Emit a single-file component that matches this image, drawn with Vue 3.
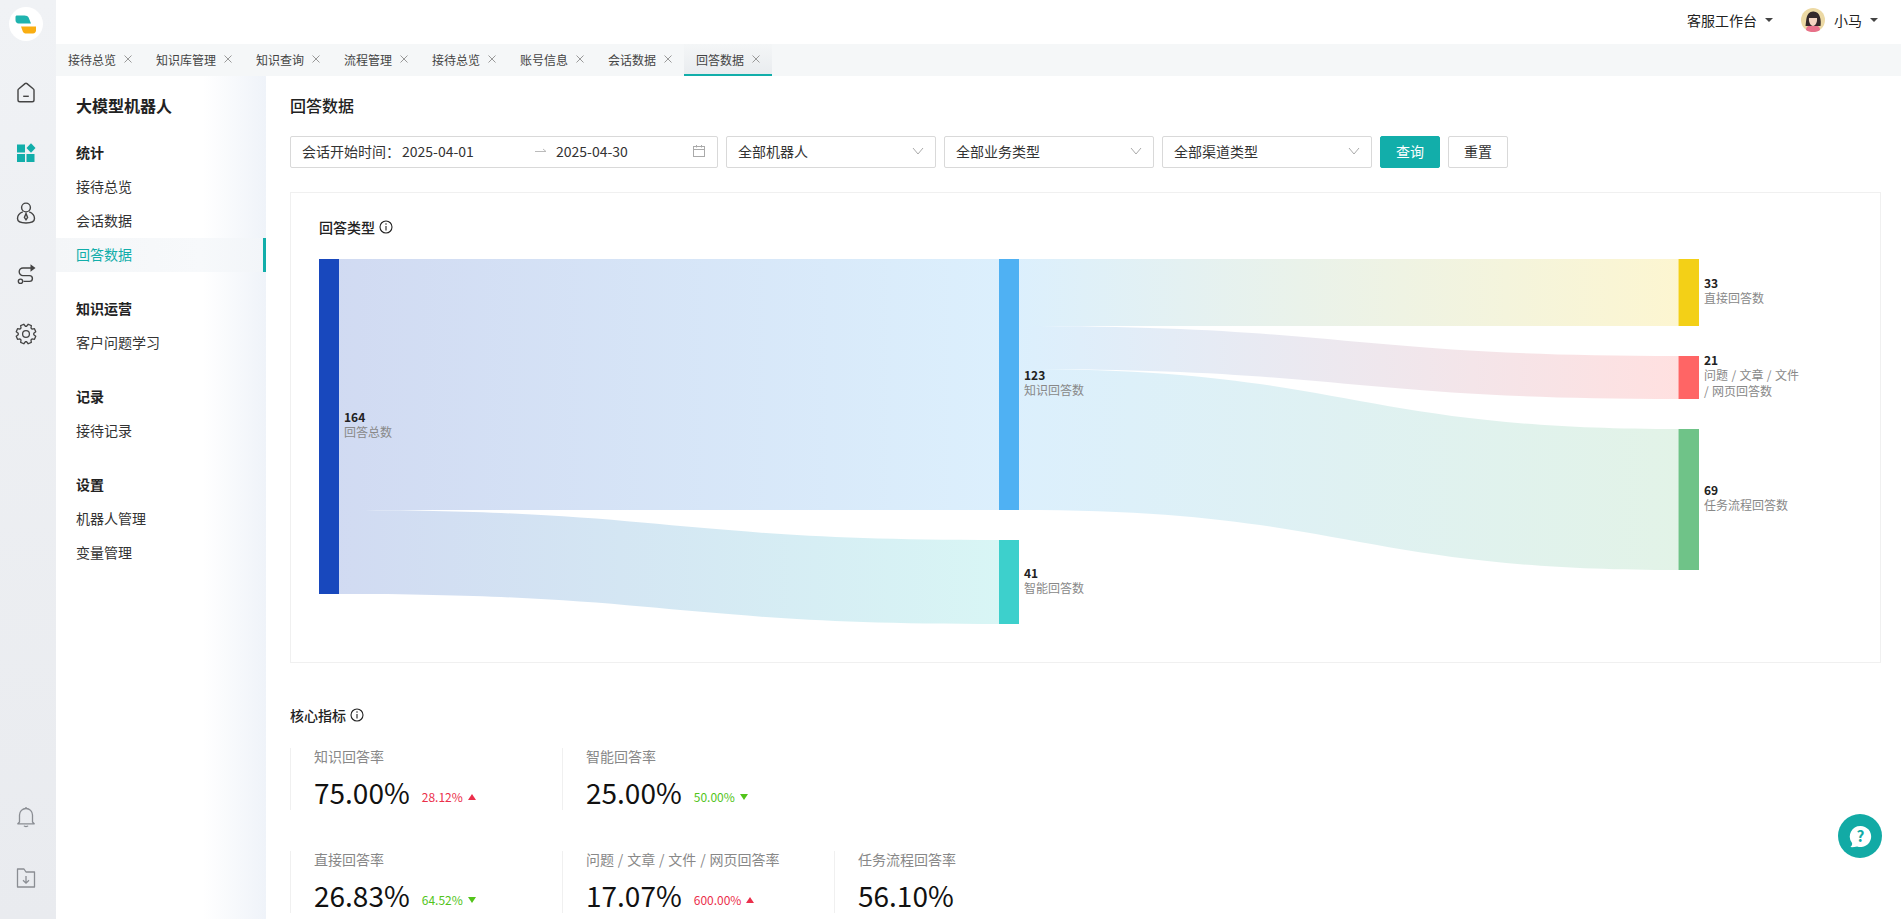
<script setup>
const tabs = ['接待总览', '知识库管理', '知识查询', '流程管理', '接待总览', '账号信息', '会话数据', '回答数据']

const menu = [
  { title: '统计', items: ['接待总览', '会话数据', '回答数据'] },
  { title: '知识运营', items: ['客户问题学习'] },
  { title: '记录', items: ['接待记录'] },
  { title: '设置', items: ['机器人管理', '变量管理'] },
]

const selects = ['全部机器人', '全部业务类型', '全部渠道类型']

// outline of the settings icon: 8 teeth round a 22px box
const gearPath = (() => {
  const pts = []
  for (let i = 0; i < 8; i++) {
    const a = (i * Math.PI) / 4 + Math.PI / 8
    for (const [r, off] of [[7.8, -0.3], [10, -0.17], [10, 0.17], [7.8, 0.3]]) {
      pts.push(`${(11 + r * Math.cos(a + off)).toFixed(2)},${(11 + r * Math.sin(a + off)).toFixed(2)}`)
    }
  }
  return `M${pts.join(' L')} Z`
})()

const nodes = {
  total: { x: 0, w: 20, y0: 0, y1: 335, color: '#1848bd', lines: ['回答总数'], value: 164, cy: 158 },
  know: { x: 680, w: 20, y0: 0, y1: 251, color: '#4fb1f3', lines: ['知识回答数'], value: 123, cy: 116 },
  smart: { x: 680, w: 20, y0: 281, y1: 365, color: '#3dd0cc', lines: ['智能回答数'], value: 41, cy: 314 },
  direct: { x: 1359.5, w: 20.5, y0: 0, y1: 67, color: '#f3d017', lines: ['直接回答数'], value: 33, cy: 24 },
  doc: { x: 1359.5, w: 20.5, y0: 97, y1: 140, color: '#ff6565', lines: ['问题 / 文章 / 文件', '/ 网页回答数'], value: 21, cy: 101 },
  task: { x: 1359.5, w: 20.5, y0: 170, y1: 311, color: '#6fc388', lines: ['任务流程回答数'], value: 69, cy: 231 },
}
const nodeList = Object.values(nodes)

// sy/ty: top of the band at each end, h: band height
const links = [
  { id: 'l1', from: 'total', to: 'know', sy: 0, ty: 0, h: 251 },
  { id: 'l2', from: 'total', to: 'smart', sy: 251, ty: 281, h: 84 },
  { id: 'l3', from: 'know', to: 'direct', sy: 0, ty: 0, h: 67 },
  { id: 'l4', from: 'know', to: 'doc', sy: 67, ty: 97, h: 43 },
  { id: 'l5', from: 'know', to: 'task', sy: 110, ty: 170, h: 141 },
].map((l) => {
  const a = nodes[l.from]
  const b = nodes[l.to]
  const x0 = a.x + a.w
  const x1 = b.x
  const mid = (x0 + x1) / 2
  const d = `M${x0},${l.sy} C${mid},${l.sy} ${mid},${l.ty} ${x1},${l.ty} L${x1},${l.ty + l.h} C${mid},${l.ty + l.h} ${mid},${l.sy + l.h} ${x0},${l.sy + l.h} Z`
  return { ...l, d, x0, x1, c0: a.color, c1: b.color }
})

const metricRows = [
  [
    { label: '知识回答率', value: '75.00%', delta: '28.12%', up: true },
    { label: '智能回答率', value: '25.00%', delta: '50.00%', up: false },
  ],
  [
    { label: '直接回答率', value: '26.83%', delta: '64.52%', up: false },
    { label: '问题 / 文章 / 文件 / 网页回答率', value: '17.07%', delta: '600.00%', up: true },
    { label: '任务流程回答率', value: '56.10%' },
  ],
]
</script>

<template>
  <div class="app">
    <aside class="rail">
      <div class="logo">
        <svg width="22" height="19" viewBox="0 0 22 19">
          <path d="M2 .5h7.500c2 0 3.500.8 4.200 2.200L16 8.500H3.500C1.800 8.500.5 7 .5 5V2C.5 1 1 .5 2 .5z" fill="#1fb3ae" />
          <path d="M6 11.500h15v3.800c0 1.800-1.200 3.200-3 3.200h-6.500c-2 0-3.200-.8-3.800-2.300z" fill="#f9ae12" />
        </svg>
      </div>
      <div class="rail-item">
        <svg width="20" height="21" viewBox="0 0 20 21" fill="none" stroke="#444" stroke-width="1.400">
          <path d="M2 8.200a1.500 1.500 0 0 1 .6-1.200L9 1.600a1.600 1.600 0 0 1 2 0l6.400 5.400a1.500 1.500 0 0 1 .6 1.200V18a1.800 1.800 0 0 1-1.800 1.800H3.800A1.800 1.800 0 0 1 2 18z" />
          <path d="M7.200 14.300h5.600" />
        </svg>
      </div>
      <div class="rail-item">
        <svg width="20" height="20" viewBox="0 0 20 20" fill="#12aeaa">
          <rect x="1" y="1.500" width="8" height="8" />
          <rect x="1" y="11" width="8" height="8" />
          <rect x="10.500" y="11" width="8" height="8" />
          <path d="M15 .3 19.500 5 15 9.700 10.500 5z" />
        </svg>
      </div>
      <div class="rail-item">
        <svg width="20" height="22" viewBox="0 0 20 22" fill="none" stroke="#444" stroke-width="1.400">
          <circle cx="10" cy="5.500" r="4.400" />
          <path d="M6.800 9.800C3.500 11 1.500 13.500 1.500 16.500c0 3 3.500 4.500 8.500 4.500s8.500-1.500 8.500-4.500c0-3-2-5.500-5.300-6.700" />
          <path d="M10 11.500l-1.600 4 1.600 2.300 1.600-2.300z" />
        </svg>
      </div>
      <div class="rail-item">
        <svg width="20" height="20" viewBox="0 0 20 20" fill="none" stroke="#444" stroke-width="1.400">
          <path d="M15 4H7a3.800 3.800 0 0 0 0 7.600h6.500a2.900 2.900 0 0 1 0 5.800H7.500" />
          <circle cx="4.500" cy="17.300" r="2.200" />
          <path d="M14.500.3l5 3.700-5 3.700z" fill="#444" stroke="none" />
        </svg>
      </div>
      <div class="rail-item">
        <svg width="22" height="22" viewBox="0 0 22 22" fill="none" stroke="#444" stroke-width="1.300" stroke-linejoin="round">
          <circle cx="11" cy="11" r="3.400" />
          <path :d="gearPath" />
        </svg>
      </div>
      <div class="rail-spacer" />
      <div class="rail-item">
        <svg width="20" height="22" viewBox="0 0 20 22" fill="none" stroke="#8a8d93" stroke-width="1.300">
          <path d="M3.500 16V9a6.500 6.500 0 0 1 13 0v7l1.700 1.800H1.800z" stroke-linejoin="round" />
          <path d="M8 19.800c.5 1 3.500 1 4 0M10 1v1.500" />
        </svg>
      </div>
      <div class="rail-item">
        <svg width="20" height="20" viewBox="0 0 20 20" fill="none" stroke="#8a8d93" stroke-width="1.300">
          <path d="M1.500 1h6.500l2 3h8.500v15h-17z" stroke-linejoin="round" />
          <path d="M10 8v7M7 12.300l3 2.900 3-2.900" />
        </svg>
      </div>
    </aside>

    <div class="main">
      <header class="topbar">
        <div class="drop">客服工作台<i class="caret" /></div>
        <div class="user">
          <svg class="avatar" width="24" height="24" viewBox="0 0 24 24">
            <circle cx="12" cy="12" r="12" fill="#ecd9a4" />
            <path d="M5 22c0-3 2-5 7-5s7 2 7 5c-2 1.500-4.500 2-7 2s-5-.5-7-2z" fill="#e8708a" />
            <path d="M4.500 18c1-5 0-14 7.500-14.500S20.500 13 19.500 18l-3 0H7.500z" fill="#33282a" />
            <path d="M8 10h8c.5 4-1.500 8-4 8s-4.500-4-4-8z" fill="#f3d3c0" />
          </svg>
          小马<i class="caret" />
        </div>
      </header>

      <nav class="tabs">
        <div
          v-for="(tab, i) in tabs"
          :key="i"
          :class="['tab', { active: i === tabs.length - 1 }]"
        >
          {{ tab }}
          <svg width="8" height="8" viewBox="0 0 8 8" stroke="#999" stroke-width="1">
            <path d="M.5.5l7 7M7.500.5l-7 7" />
          </svg>
        </div>
      </nav>

      <div class="body">
        <aside class="sidebar">
          <h2 class="side-title">大模型机器人</h2>
          <section v-for="group in menu" :key="group.title" class="side-group">
            <h3>{{ group.title }}</h3>
            <div
              v-for="item in group.items"
              :key="item"
              :class="['side-item', { active: item === '回答数据' }]"
            >
              {{ item }}
            </div>
          </section>
        </aside>

        <main class="content">
          <h1 class="page-title">回答数据</h1>

          <div class="filters">
            <div class="date-box">
              <span class="date-label">会话开始时间：</span>
              <span class="date-from">2025-04-01</span>
              <svg class="date-arrow" width="14" height="8" viewBox="0 0 14 8" fill="none" stroke="#bbb">
                <path d="M1 4.500h11L9 2" />
              </svg>
              <span>2025-04-30</span>
              <svg class="date-cal" width="14" height="14" viewBox="0 0 14 14" fill="none" stroke="#aaa">
                <rect x="1.500" y="2.500" width="11" height="10" />
                <path d="M1.500 5.500h11M4.500 1v2.500M9.500 1v2.500" />
              </svg>
            </div>
            <div v-for="s in selects" :key="s" class="select">
              {{ s }}
              <svg width="12" height="8" viewBox="0 0 12 8" fill="none" stroke="#aaa">
                <path d="M1 1l5 6 5-6" />
              </svg>
            </div>
            <button class="btn primary">查询</button>
            <button class="btn">重置</button>
          </div>

          <section class="card">
            <div class="heading">
              回答类型
              <svg width="14" height="14" viewBox="0 0 14 14" fill="none" stroke="#222" stroke-width="1.100">
                <circle cx="7" cy="7" r="6" />
                <path d="M7 6v4.500M7 3.300v1.400" />
              </svg>
            </div>
            <svg class="sankey" width="1540" height="370" viewBox="0 0 1540 370">
              <defs>
                <linearGradient
                  v-for="l in links"
                  :id="l.id"
                  :key="l.id"
                  gradientUnits="userSpaceOnUse"
                  :x1="l.x0"
                  :x2="l.x1"
                  y1="0"
                  y2="0"
                >
                  <stop offset="0" :stop-color="l.c0" stop-opacity="0.2" />
                  <stop offset="1" :stop-color="l.c1" stop-opacity="0.2" />
                </linearGradient>
              </defs>
              <path v-for="l in links" :key="l.id" :d="l.d" :fill="`url(#${l.id})`" />
              <g v-for="n in nodeList" :key="n.value">
                <rect :x="n.x" :y="n.y0" :width="n.w" :height="n.y1 - n.y0" :fill="n.color" />
                <text class="node-value" :x="n.x + n.w + 5" :y="n.cy + 5">{{ n.value }}</text>
                <text
                  v-for="(line, i) in n.lines"
                  :key="i"
                  class="node-label"
                  :x="n.x + n.w + 5"
                  :y="n.cy + 20 + i * 16"
                >{{ line }}</text>
              </g>
            </svg>
          </section>

          <div class="heading core">
            核心指标
            <svg width="14" height="14" viewBox="0 0 14 14" fill="none" stroke="#222" stroke-width="1.100">
              <circle cx="7" cy="7" r="6" />
              <path d="M7 6v4.500M7 3.300v1.400" />
            </svg>
          </div>

          <div class="metrics">
            <div v-for="(row, r) in metricRows" :key="r" class="metric-row">
              <div v-for="m in row" :key="m.label" class="metric">
                <div class="metric-label">{{ m.label }}</div>
                <div class="metric-line">
                  <span class="metric-value">{{ m.value }}</span>
                  <span v-if="m.delta" :class="['delta', m.up ? 'up' : 'down']">
                    {{ m.delta }}<i class="tri" />
                  </span>
                </div>
              </div>
            </div>
          </div>
        </main>
      </div>
    </div>

    <div class="help">
      <svg width="25" height="25" viewBox="0 0 26 26">
        <path d="M13 2a11 11 0 1 1-3.500 21.400C7 24 4 24.300 2.500 24c1.500-1 2-2.500 1.700-4.300A11 11 0 0 1 13 2z" fill="#fff" />
        <text x="13" y="18.500" text-anchor="middle" class="help-mark">?</text>
      </svg>
    </div>
  </div>
</template>

<style scoped>
.app {
  display: flex;
  height: 100vh;
  overflow: hidden;
  position: relative;
  color: #222;
  font-family: "Noto Sans CJK SC", "Noto Sans", sans-serif;
  font-size: 14px;
}

.rail {
  display: flex;
  flex-direction: column;
  align-items: center;
  flex: none;
  width: 56px;
  padding: 0 4px 11px 0;
  box-sizing: border-box;
  background: linear-gradient(#f0f2f5, #e9ebef);
}

.logo {
  display: flex;
  align-items: center;
  justify-content: center;
  width: 34px;
  height: 34px;
  margin: 7px 0 21px;
  border-radius: 50%;
  background: #fff;
}

.rail-item {
  display: flex;
  align-items: center;
  justify-content: center;
  height: 60.5px;
}

.rail-spacer {
  flex: 1;
}

.main {
  display: flex;
  flex-direction: column;
  flex: 1;
  min-width: 0;
}

.topbar {
  display: flex;
  align-items: center;
  justify-content: flex-end;
  gap: 28px;
  flex: none;
  height: 44px;
  padding: 0 23px 4px 0;
  box-sizing: border-box;
  background: #fff;
}

.drop,
.user {
  display: flex;
  align-items: center;
}

.avatar {
  margin-right: 9px;
}

.caret {
  width: 0;
  height: 0;
  margin-left: 8px;
  border-left: 4px solid transparent;
  border-right: 4px solid transparent;
  border-top: 4px solid #444;
}

.tabs {
  display: flex;
  flex: none;
  height: 32px;
  background: #f5f7f8;
}

.tab {
  display: flex;
  align-items: center;
  gap: 8px;
  padding: 0 12px 2px;
  box-sizing: border-box;
  font-size: 12px;
  color: #444;
}

.tab.active {
  padding-bottom: 0;
  background: linear-gradient(#f4f6f7, #e9ecef);
  border-bottom: 2px solid #12aeaa;
}

.body {
  display: flex;
  flex: 1;
  min-height: 0;
}

.sidebar {
  flex: none;
  width: 210px;
  background: linear-gradient(90deg, #fff 70%, #eff3f9);
}

.side-title {
  margin: 0;
  padding: 17px 20px 0;
  font-size: 16px;
  line-height: 24px;
  font-weight: 600;
}

.side-group {
  margin-bottom: 20px;
}

.side-group h3 {
  margin: 0;
  padding: 0 20px;
  height: 34px;
  line-height: 32px;
  font-size: 14px;
  font-weight: 600;
}

.side-title + .side-group {
  margin-top: 19px;
}

.side-item {
  height: 34px;
  padding: 0 20px;
  line-height: 32px;
  color: #333;
}

.side-item.active {
  color: #12aeaa;
  background: linear-gradient(90deg, #f4f6f8, #f7f9fb 70%, #f2f5f9);
  border-right: 3px solid #12aeaa;
}

.content {
  flex: 1;
  min-width: 0;
  padding: 17px 20px 0 24px;
  background: #fff;
}

.page-title {
  margin: 0;
  font-size: 16px;
  line-height: 24px;
  font-weight: 500;
}

.filters {
  display: flex;
  gap: 8px;
  margin-top: 19px;
}

.date-box,
.select {
  display: flex;
  align-items: center;
  height: 32px;
  padding: 0 11px 2px;
  border: 1px solid #d9d9d9;
  border-radius: 2px;
  box-sizing: border-box;
  color: #333;
}

.date-box {
  width: 428px;
  font-size: 14px;
}

.date-label {
  width: 100px;
  flex: none;
}

.date-from {
  width: 132px;
  flex: none;
}

.date-arrow {
  margin-right: 8px;
  flex: none;
}

.date-cal {
  margin-left: auto;
}

.select {
  justify-content: space-between;
  width: 210px;
}

.btn {
  width: 60px;
  height: 32px;
  padding: 0 0 2px;
  border: 1px solid #d9d9d9;
  border-radius: 2px;
  background: #fff;
  color: #333;
  font: inherit;
}

.btn.primary {
  border-color: #12aeaa;
  background: #12aeaa;
  color: #fff;
}

.card {
  height: 471px;
  margin-top: 24px;
  padding: 24px 28px 0;
  border: 1px solid #f0f0f0;
  box-sizing: border-box;
}

.heading {
  display: flex;
  align-items: center;
  gap: 4px;
  height: 20px;
  line-height: 20px;
  font-weight: 500;
}

.sankey {
  display: block;
  margin-top: 22px;
}

.node-value {
  font-size: 12px;
  font-weight: 700;
  fill: #222;
}

.node-label {
  font-size: 12px;
  fill: #888;
  word-spacing: 0.7px;
}

.core {
  margin-top: 42px;
}

.metrics {
  margin-top: 23px;
}

.metric-row {
  display: flex;
  margin-bottom: 41px;
}

.metric {
  width: 272px;
  padding-left: 23px;
  box-sizing: border-box;
  border-left: 1px solid #f0f0f0;
}

.metric-label {
  line-height: 16px;
  margin-bottom: 10px;
  color: #888;
  word-spacing: 0.7px;
}

.metric-line {
  display: flex;
  align-items: flex-end;
  gap: 12px;
}

.metric-value {
  font-size: 28px;
  line-height: 36px;
  color: #111;
}

.delta {
  display: inline-flex;
  align-items: center;
  gap: 5px;
  padding-bottom: 4px;
  font-size: 12px;
  line-height: 18px;
}

.delta.up {
  color: #eb2f4b;
}

.delta.down {
  color: #52c41a;
}

.tri {
  width: 0;
  height: 0;
  border-left: 4px solid transparent;
  border-right: 4px solid transparent;
}

.up .tri {
  border-bottom: 6px solid #eb2f4b;
}

.down .tri {
  border-top: 6px solid #52c41a;
}

.help {
  position: absolute;
  left: 1838px;
  top: 814px;
  display: flex;
  align-items: center;
  justify-content: center;
  width: 44px;
  height: 44px;
  border-radius: 50%;
  background: #12aaa5;
}

.help-mark {
  font-size: 16px;
  font-weight: 700;
  fill: #12aaa5;
}
</style>
